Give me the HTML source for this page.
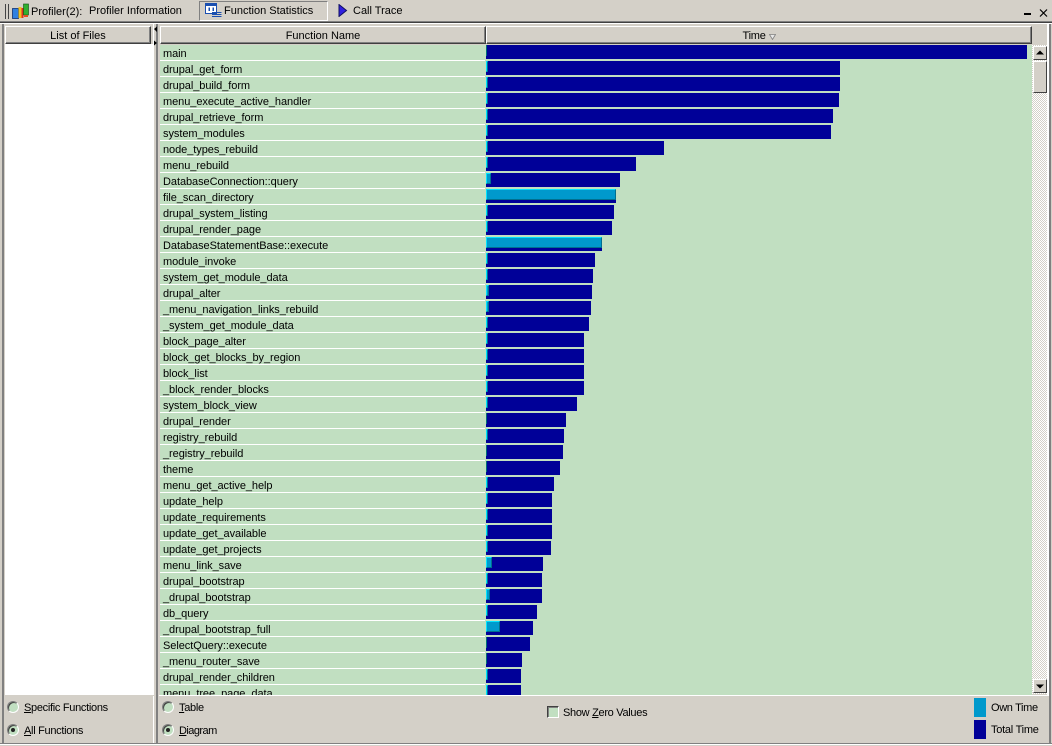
<!DOCTYPE html>
<html><head><meta charset="utf-8"><style>
html,body{margin:0;padding:0}
body{width:1052px;height:746px;position:relative;overflow:hidden;background:#d4d0c8;font:11px "Liberation Sans",sans-serif;color:#000}
.a{position:absolute}
.t{position:absolute;white-space:nowrap;line-height:14px}
.n{letter-spacing:-.3px}
.h{position:absolute;top:26px;height:18px;box-sizing:border-box;background:#d4d0c8;border:1px solid;border-color:#fff #404040 #404040 #fff;box-shadow:inset -1px -1px 0 #808080;text-align:center;line-height:18px}
#rows{position:absolute;left:160px;top:45px;width:325px;height:650px;overflow:hidden}
#rows div{height:15px;border-bottom:1px solid #fff;background:#c1dfc1;padding-left:3px;line-height:18px;white-space:nowrap;letter-spacing:-.06px}
#bars{position:absolute;left:486px;top:45px;width:546px;height:650px;overflow:hidden;background:#c1dfc1}
#bars p{margin:0 0 2px;height:14px;background:#000098;position:relative}
#bars i{position:absolute;left:0;top:0;height:11px;width:2px;box-sizing:border-box;background:#0099cc;border:1px solid;border-color:#00e4ff #006f8f #006f8f #00e4ff}
#bars i.d{width:1px;border:0;background:#006f78}
.r{position:absolute;width:12px;height:12px;box-sizing:border-box;border-radius:50%;border:1px solid;border-color:#808080 #fff #fff #808080;background:#c1dfc1;box-shadow:inset 1px 1px 0 #404040}
.r.on:after{content:"";position:absolute;left:3px;top:3px;width:4px;height:4px;border-radius:50%;background:#222}
</style></head><body>

<div class="a" style="left:5px;top:4px;width:1px;height:15px;background:#444"></div>
<div class="a" style="left:8px;top:4px;width:1px;height:15px;background:#444"></div>
<svg class="a" style="left:12px;top:3px" width="17" height="16" viewBox="0 0 17 16"><rect x=".5" y="5.500" width="6" height="10" fill="#3080e0" stroke="#103070" stroke-width=".8"/><rect x="6.500" y="4" width="3" height="11" fill="#f0c020"/><rect x="9.500" y="5" width="2" height="10" fill="#e03020"/><rect x="11.500" y="1" width="5" height="11" fill="#30b030" stroke="#105010" stroke-width=".6"/><rect x="12" y="12" width="4" height="2" fill="#e05020"/></svg>
<span class="t" style="left:31px;top:5px">Profiler(2):</span>
<span class="t" style="left:89px;top:4px">Profiler Information</span>
<div class="a" style="left:199px;top:1px;width:129px;height:20px;box-sizing:border-box;border:1px solid;border-color:#808080 #fff #fff #808080"></div>
<svg class="a" style="left:205px;top:3px" width="17" height="16" viewBox="0 0 17 16"><rect x=".5" y=".5" width="11" height="10" fill="#fff" stroke="#1a4fb0"/><rect x="1" y="1" width="10" height="2" fill="#1a4fb0"/><path d="M3.500 4.500h1.500v3.500H3.500zM7.500 4.500h1.500v3.500H7.500z" fill="#1a4fb0"/><path d="M7 9.500h9.500M7 11.500h9.500M7 13.500h9.500" stroke="#1a4fb0" stroke-width="1"/></svg>
<span class="t" style="left:224px;top:4px">Function Statistics</span>
<svg class="a" style="left:338px;top:4px" width="10" height="13" viewBox="0 0 10 13"><path d="M1 .5L8.500 6.500 1 12.500z" fill="#3020e0" stroke="#101060"/></svg>
<span class="t" style="left:353px;top:4px">Call Trace</span>
<div class="a" style="left:1024px;top:13px;width:7px;height:2px;background:#000"></div>
<svg class="a" style="left:1039px;top:9px" width="9" height="8" viewBox="0 0 9 8"><path d="M1 .5L8 7.500M8 .5L1 7.500" stroke="#000" stroke-width="1.200"/></svg>

<div class="a" style="left:0;top:21px;width:1052px;height:1px;background:#808080"></div>
<div class="a" style="left:0;top:22px;width:1052px;height:1px;background:#404040"></div>
<div class="a" style="left:0;top:23px;width:1052px;height:1px;background:#fff"></div>

<div class="a" style="left:2px;top:24px;width:2px;height:719px;background:#808080"></div>
<div class="a" style="left:5px;top:44px;width:148px;height:652px;background:#fff"></div>
<div class="a" style="left:153px;top:24px;width:1px;height:719px;background:#fff"></div>
<div class="a" style="left:156px;top:24px;width:2px;height:719px;background:#808080"></div>
<svg class="a" style="left:152px;top:26px" width="6" height="20" viewBox="0 0 6 20"><path d="M2 3L5 .5V6zM2 14.500L5 17 2 19.500z" fill="#000"/></svg>

<div class="h" style="left:5px;width:146px">List of Files</div>
<div class="h" style="left:160px;width:326px">Function Name</div>
<div class="h" style="left:486px;width:546px;letter-spacing:-.2px">Time <svg width="7" height="6" viewBox="0 0 7 6" style="vertical-align:-1px"><path d="M.5.500h6L3.500 5.500z" fill="#e8e8e8" stroke="#808080" stroke-width=".8"/></svg></div>

<div id="rows">
<div>main</div><div>drupal_get_form</div><div>drupal_build_form</div><div>menu_execute_active_handler</div><div>drupal_retrieve_form</div><div>system_modules</div><div>node_types_rebuild</div><div>menu_rebuild</div><div>DatabaseConnection::query</div><div>file_scan_directory</div><div>drupal_system_listing</div><div>drupal_render_page</div><div>DatabaseStatementBase::execute</div><div>module_invoke</div><div>system_get_module_data</div><div>drupal_alter</div><div>_menu_navigation_links_rebuild</div><div>_system_get_module_data</div><div>block_page_alter</div><div>block_get_blocks_by_region</div><div>block_list</div><div>_block_render_blocks</div><div>system_block_view</div><div>drupal_render</div><div>registry_rebuild</div><div>_registry_rebuild</div><div>theme</div><div>menu_get_active_help</div><div>update_help</div><div>update_requirements</div><div>update_get_available</div><div>update_get_projects</div><div>menu_link_save</div><div>drupal_bootstrap</div><div>_drupal_bootstrap</div><div>db_query</div><div>_drupal_bootstrap_full</div><div>SelectQuery::execute</div><div>_menu_router_save</div><div>drupal_render_children</div><div>menu_tree_page_data</div>
</div>
<div class="a" style="left:485px;top:45px;width:1px;height:650px;background:#c1dfc1"></div>

<div id="bars">
<p style="width:541px"><i class="d"></i></p>
<p style="width:354px"><i></i></p>
<p style="width:354px"><i></i></p>
<p style="width:353px"><i></i></p>
<p style="width:347px"><i></i></p>
<p style="width:345px"><i></i></p>
<p style="width:178px"><i></i></p>
<p style="width:150px"><i></i></p>
<p style="width:134px"><i style="width:5px"></i></p>
<p style="width:130px"><i style="width:130px"></i></p>
<p style="width:128px"><i></i></p>
<p style="width:126px"><i></i></p>
<p style="width:116px"><i style="width:116px"></i></p>
<p style="width:109px"><i></i></p>
<p style="width:107px"><i></i></p>
<p style="width:106px"><i style="width:3px"></i></p>
<p style="width:105px"><i style="width:3px"></i></p>
<p style="width:103px"><i></i></p>
<p style="width:98px"><i></i></p>
<p style="width:98px"><i></i></p>
<p style="width:98px"><i></i></p>
<p style="width:98px"><i></i></p>
<p style="width:91px"><i></i></p>
<p style="width:80px"><i class="d"></i></p>
<p style="width:78px"><i></i></p>
<p style="width:77px"><i class="d"></i></p>
<p style="width:74px"><i class="d"></i></p>
<p style="width:68px"><i></i></p>
<p style="width:66px"><i></i></p>
<p style="width:66px"><i></i></p>
<p style="width:66px"><i></i></p>
<p style="width:65px"><i></i></p>
<p style="width:57px"><i style="width:6px"></i></p>
<p style="width:56px"><i></i></p>
<p style="width:56px"><i style="width:4px"></i></p>
<p style="width:51px"><i style="width:2px"></i></p>
<p style="width:47px"><i style="width:14px"></i></p>
<p style="width:44px"><i class="d"></i></p>
<p style="width:36px"><i class="d"></i></p>
<p style="width:35px"><i></i></p>
<p style="width:35px"><i></i></p>
</div>

<div class="a" style="left:1032px;top:45px;width:15px;height:649px;background:repeating-conic-gradient(#d4d0c8 0 25%,#fff 0 50%) 0 0/2px 2px"></div>
<div class="a" style="left:1032px;top:26px;width:15px;height:19px;background:#d4d0c8"></div>
<div class="a" style="left:1033px;top:46px;width:14px;height:14px;box-sizing:border-box;background:#d4d0c8;border:1px solid;border-color:#fff #404040 #404040 #fff"></div>
<svg class="a" style="left:1036px;top:50px" width="8" height="5" viewBox="0 0 8 5"><path d="M0 4.500L4 .5 8 4.500z" fill="#000"/></svg>
<div class="a" style="left:1033px;top:61px;width:14px;height:32px;box-sizing:border-box;background:#d4d0c8;border:1px solid;border-color:#fff #404040 #404040 #fff"></div>
<div class="a" style="left:1033px;top:679px;width:14px;height:14px;box-sizing:border-box;background:#d4d0c8;border:1px solid;border-color:#fff #404040 #404040 #fff"></div>
<svg class="a" style="left:1036px;top:684px" width="8" height="5" viewBox="0 0 8 5"><path d="M0 .5L4 4.500 8 .5z" fill="#000"/></svg>
<div class="a" style="left:1047px;top:24px;width:2px;height:671px;background:#fff"></div>
<div class="a" style="left:1049px;top:24px;width:2px;height:719px;background:#808080"></div>

<div class="a" style="left:159px;top:695px;width:890px;height:1px;background:#fff"></div>
<div class="a" style="left:4px;top:695px;width:150px;height:1px;background:#d4d0c8"></div>

<div class="r" style="left:7px;top:701px"></div>
<span class="t n" style="left:24px;top:701px"><u>S</u>pecific Functions</span>
<div class="r on" style="left:7px;top:724px"></div>
<span class="t n" style="left:24px;top:724px"><u>A</u>ll Functions</span>
<div class="r" style="left:162px;top:701px"></div>
<span class="t n" style="left:179px;top:701px"><u>T</u>able</span>
<div class="r on" style="left:162px;top:724px"></div>
<span class="t" style="left:179px;top:724px;letter-spacing:-.55px"><u>D</u>iagram</span>

<div class="a" style="left:547px;top:706px;width:12px;height:12px;box-sizing:border-box;background:#c1dfc1;border:1px solid;border-color:#404040 #fff #fff #404040;box-shadow:inset 1px 1px 0 #808080"></div>
<span class="t n" style="left:563px;top:706px">Show <u>Z</u>ero Values</span>

<div class="a" style="left:974px;top:698px;width:12px;height:19px;background:#0099cc"></div>
<span class="t" style="left:991px;top:701px;letter-spacing:-.35px">Own Time</span>
<div class="a" style="left:974px;top:720px;width:12px;height:19px;background:#000098"></div>
<span class="t" style="left:991px;top:723px;letter-spacing:-.25px">Total Time</span>

<div class="a" style="left:0;top:743px;width:1052px;height:1px;background:#808080"></div>
<div class="a" style="left:0;top:744px;width:1052px;height:1px;background:#fff"></div>
</body></html>
